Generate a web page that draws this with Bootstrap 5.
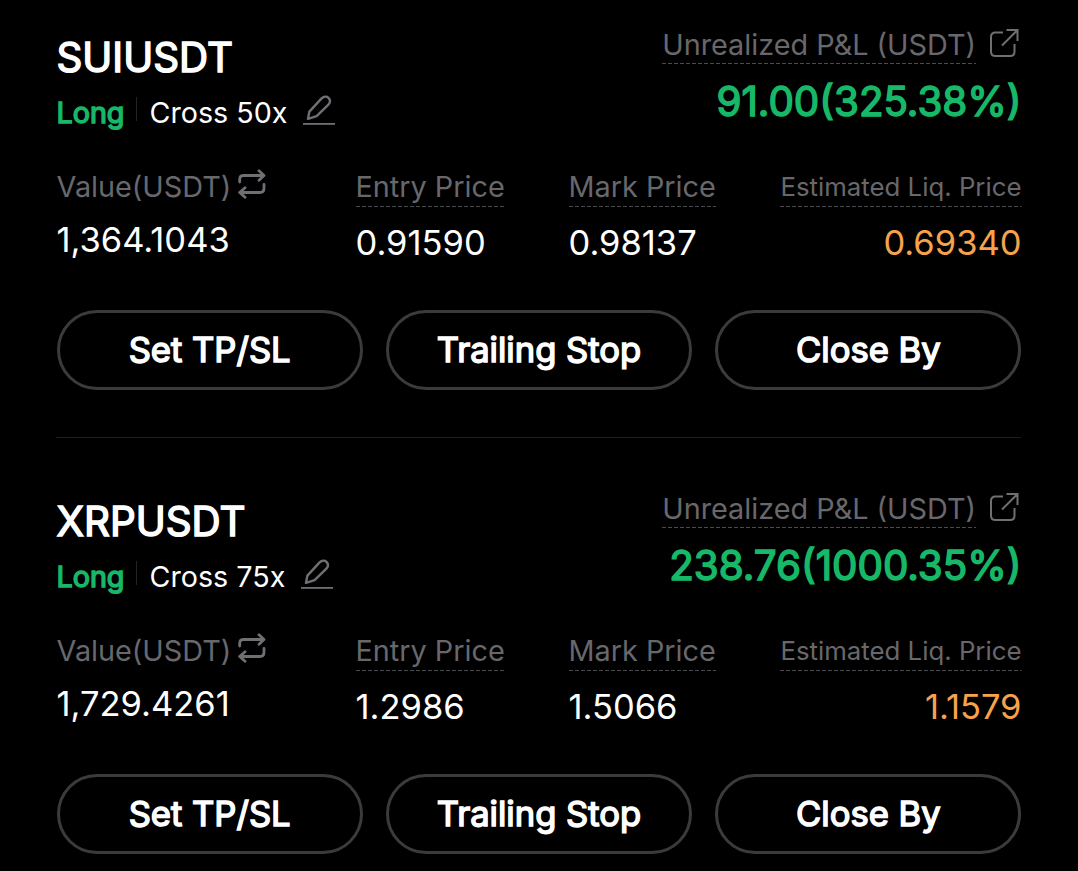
<!DOCTYPE html>
<html lang="en" data-bs-theme="dark">
<head>
<meta charset="utf-8">
<meta name="viewport" content="width=device-width, initial-scale=1">
<title>Positions</title>
<link href="https://cdn.jsdelivr.net/npm/bootstrap@5.3.0/dist/css/bootstrap.min.css" rel="stylesheet">
<style>
body{background:#000;color:#fff;font-family:Inter,"Liberation Sans",sans-serif;overflow:hidden}
.positions{padding:29px 57px 0 56px}
.position{height:409px;border-bottom:1.5px solid #1e1e20;margin-bottom:55px}
.position:last-child{border:0;margin:0}
.faux{-webkit-text-stroke:1.5px currentColor}
.head-row{height:139px}
.symbol{font-size:40.3px;line-height:50px;margin:4px 0 10px .5px}
.side-row{font-size:28.7px;line-height:40px;padding-left:.5px}
.up{color:#17b868}
.vline{width:1px;height:24px;background:#242428;margin:4px 12px 0}
.quiet{color:#68686c}
.lbl{font-size:28.8px;line-height:32px;white-space:nowrap}
.dashed{padding-bottom:3px;background:repeating-linear-gradient(90deg,#4b4c50 0 4px,transparent 4px 6px) bottom/100% 1.5px no-repeat}
.figures .dashed{padding-bottom:4px;margin-bottom:-1px}
.pnl{font-size:40.3px;line-height:50px;margin:13px -.5px 0 0}
.pen{margin:2px 0 0 15.5px}
.ext{margin:-1px 2.5px 0 13.5px}
.swap{margin:-2px 0 0 7px}
.figures{display:grid;grid-template-columns:299px 213px 1fr auto;height:142px;padding:3px 0 0 .5px;margin-right:-.5px}
.figure{font-size:34.5px;line-height:40px;margin-top:17px;white-space:nowrap}
.liq{color:#f7a34b}
.lbl.sm{font-size:25.8px}
.actions{gap:23px;margin:0 -.5px 0 .5px}
.action{height:80px;border:3px solid #3b3b3e;color:#fff;font-size:34.6px;line-height:1;padding:0 0 2px;flex:1 1 0}
svg{display:block;flex:none;fill:none;stroke:#707074}
</style>
</head>
<body>
<main class="positions" id="list"></main>
<template id="tpl">
<section class="position">
  <div class="head-row d-flex justify-content-between">
    <div>
      <div class="symbol faux"><span data-k="symbol"></span></div>
      <div class="side-row d-flex">
        <span class="up faux">Long</span><span class="vline"></span><span data-k="lev"></span>
        <svg class="pen" width="32" height="30" viewBox="0 0 32 30" stroke-width="2.4"><path d="M5 23.8 6.4 16.6 18.6 3.4C20.9 1.1 23.8 1.2 25.5 2.8 27.3 4.6 27.3 7.4 25.4 9.7L13.6 21.2Z" stroke-linejoin="round"/><path d="M0 28.9H32" stroke-width="1.8"/></svg>
      </div>
    </div>
    <div class="d-flex flex-column align-items-end">
      <div class="d-flex"><span class="lbl quiet dashed">Unrealized P&amp;L (USDT)</span>
        <svg class="ext" width="29" height="30" viewBox="0 0 29 30" stroke-width="2"><path d="M13 4.5H5.5Q1 4.5 1 9V23.5Q1 28 5.5 28H20Q24.5 28 24.5 23.5V16M16.5 2H27.5V13M27.5 2 12 17.5"/></svg></div>
      <div class="pnl up faux"><span data-k="pnl"></span></div>
    </div>
  </div>
  <div class="figures">
    <div><div class="d-flex"><span class="lbl quiet">Value(USDT)</span>
      <svg class="swap" width="28" height="30" viewBox="0 0 28 30" stroke-width="2.8" stroke-linecap="round" stroke-linejoin="round"><path d="M1.7 13V10.5Q1.7 6.5 5.7 6.5H26M21 1.8 26 6.5 21 11.2M26 15.5V19Q26 23.5 22 23.5H1.7M7 18.7 1.7 23.5 7 28.3"/></svg></div>
      <div class="figure"><span data-k="value"></span></div></div>
    <div><span class="lbl quiet dashed d-inline-block">Entry Price</span><div class="figure"><span data-k="entry"></span></div></div>
    <div><span class="lbl quiet dashed d-inline-block">Mark Price</span><div class="figure"><span data-k="mark"></span></div></div>
    <div class="text-end"><span class="lbl sm quiet dashed d-inline-block">Estimated Liq. Price</span><div class="figure liq"><span data-k="liq"></span></div></div>
  </div>
  <div class="actions d-flex">
    <button class="btn rounded-pill action faux"><span>Set TP/SL</span></button>
    <button class="btn rounded-pill action faux"><span>Trailing Stop</span></button>
    <button class="btn rounded-pill action faux"><span>Close By</span></button>
  </div>
</section>
</template>
<script src="https://cdn.jsdelivr.net/npm/bootstrap@5.3.0/dist/js/bootstrap.bundle.min.js"></script>
<script>
const rows=[
 {symbol:'SUIUSDT',lev:'Cross 50x',pnl:'91.00(325.38%)',value:'1,364.1043',entry:'0.91590',mark:'0.98137',liq:'0.69340'},
 {symbol:'XRPUSDT',lev:'Cross 75x',pnl:'238.76(1000.35%)',value:'1,729.4261',entry:'1.2986',mark:'1.5066',liq:'1.1579'}];
for(const r of rows){
 const n=document.getElementById('tpl').content.cloneNode(true);
 n.querySelectorAll('[data-k]').forEach(e=>e.textContent=r[e.dataset.k]);
 document.getElementById('list').append(n);
}
</script>
</body>
</html>
